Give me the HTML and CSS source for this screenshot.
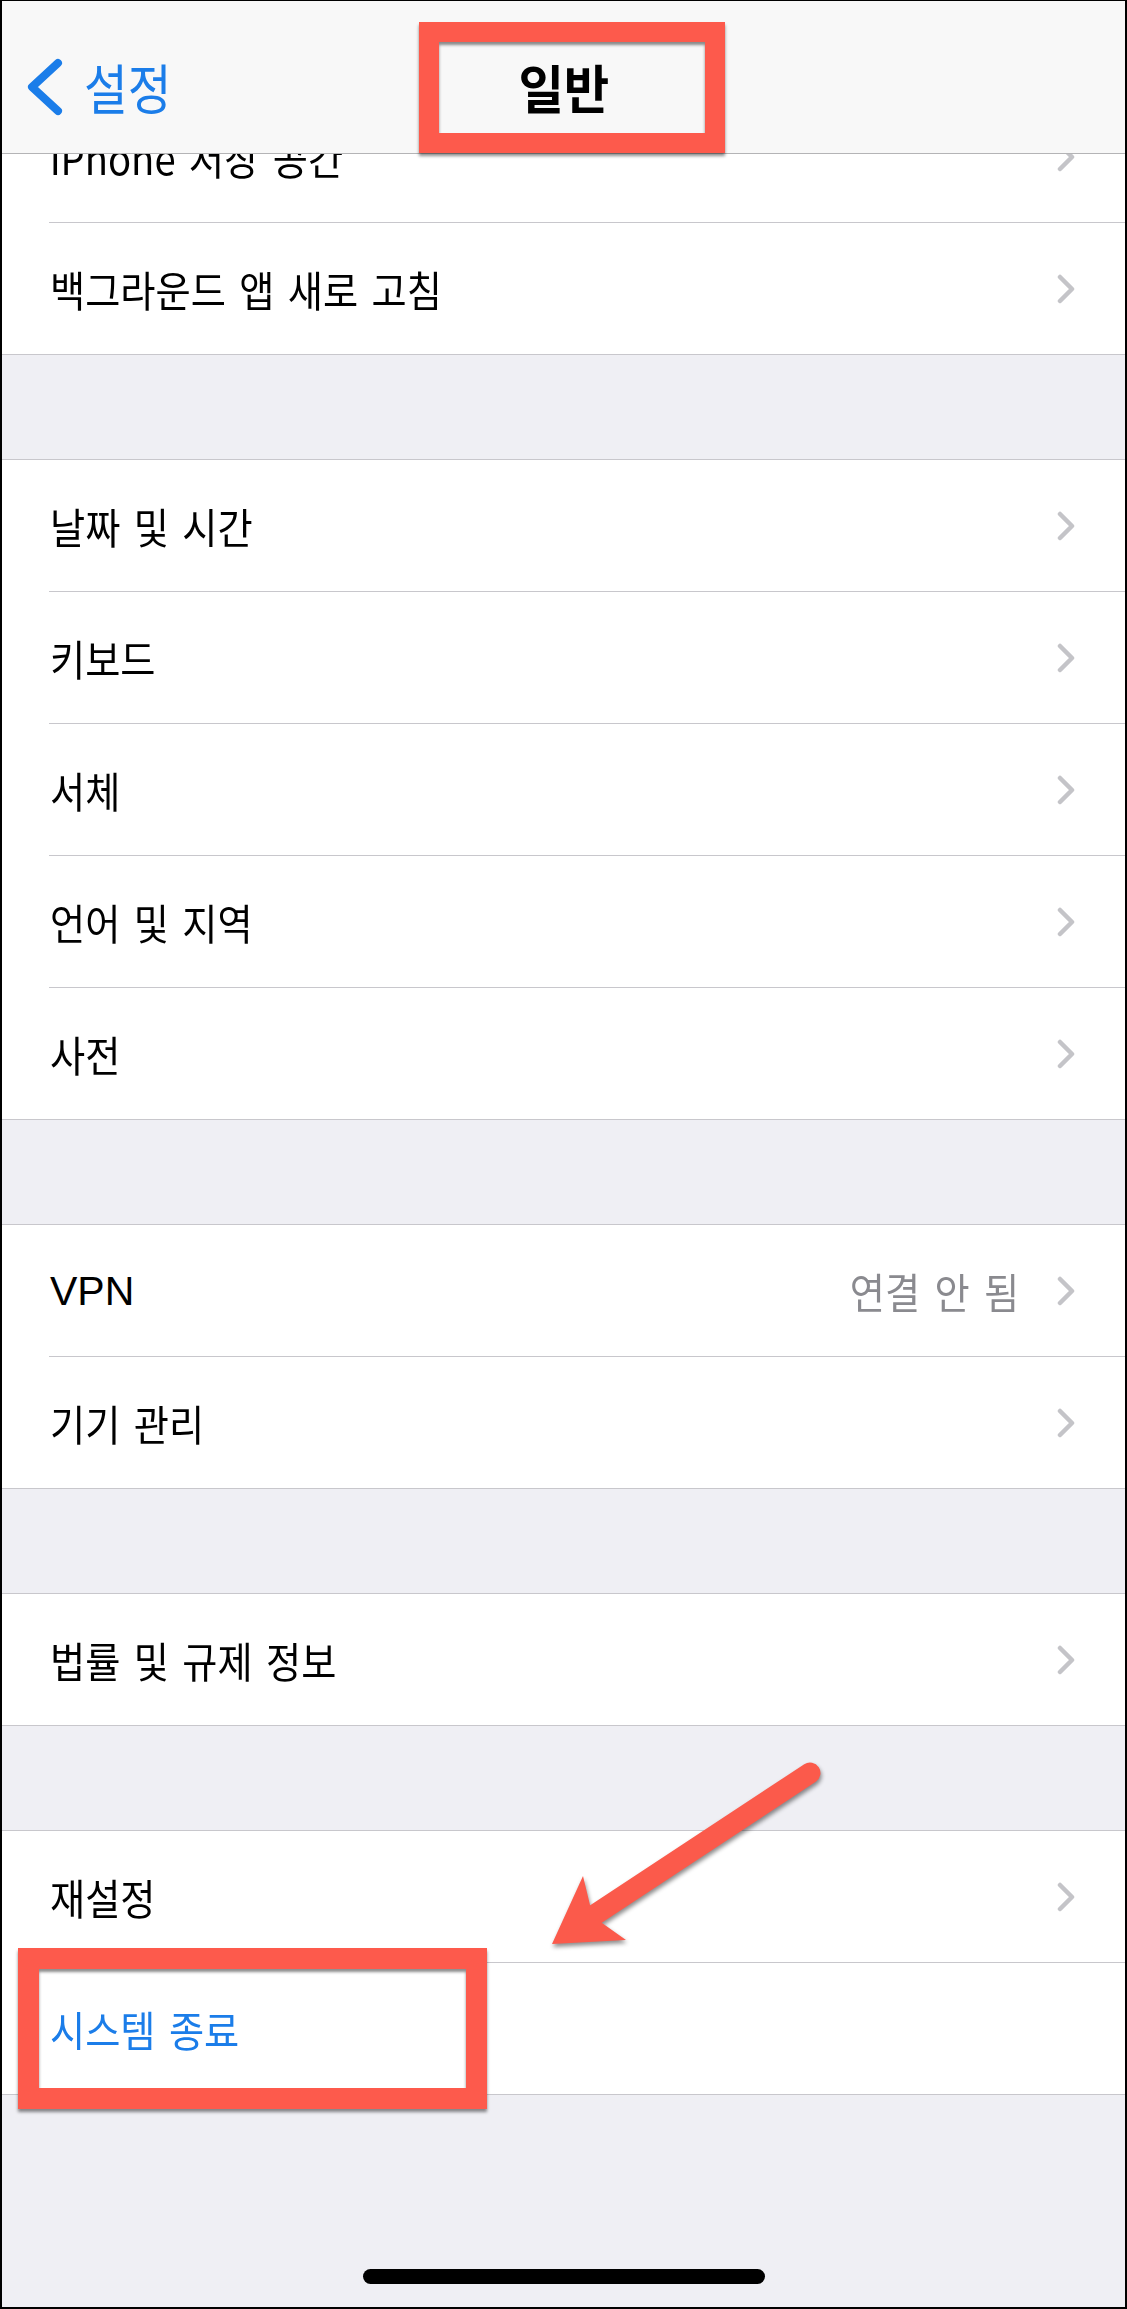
FILE: index.html
```html
<!DOCTYPE html>
<html lang="ko">
<head>
<meta charset="utf-8">
<title>일반</title>
<link rel="stylesheet" href="styles.css">
</head>
<body>
<div class="screen">
  <header class="nav">
    <a class="back">
      <svg class="back-icon" viewBox="0 0 40 60" width="40" height="60"><polyline points="34,6 8,30 34,54"/></svg>
      <span class="back-label">설정</span>
    </a>
    <h1 class="title">일반</h1>
    <span class="nav-spacer"></span>
  </header>

  <main class="list">
    <section class="group group-first">
      <div class="row"><span class="label ko">iPhone 저장 공간</span><svg class="chev" viewBox="0 0 18 30"><polyline points="3,3 15,15 3,27"/></svg></div>
      <div class="row"><span class="label ko">백그라운드 앱 새로 고침</span><svg class="chev" viewBox="0 0 18 30"><polyline points="3,3 15,15 3,27"/></svg></div>
    </section>

    <section class="group">
      <div class="row"><span class="label ko">날짜 및 시간</span><svg class="chev" viewBox="0 0 18 30"><polyline points="3,3 15,15 3,27"/></svg></div>
      <div class="row"><span class="label ko">키보드</span><svg class="chev" viewBox="0 0 18 30"><polyline points="3,3 15,15 3,27"/></svg></div>
      <div class="row"><span class="label ko">서체</span><svg class="chev" viewBox="0 0 18 30"><polyline points="3,3 15,15 3,27"/></svg></div>
      <div class="row"><span class="label ko">언어 및 지역</span><svg class="chev" viewBox="0 0 18 30"><polyline points="3,3 15,15 3,27"/></svg></div>
      <div class="row"><span class="label ko">사전</span><svg class="chev" viewBox="0 0 18 30"><polyline points="3,3 15,15 3,27"/></svg></div>
    </section>

    <section class="group">
      <div class="row"><span class="label">VPN</span><span class="value ko">연결 안 됨</span><svg class="chev" viewBox="0 0 18 30"><polyline points="3,3 15,15 3,27"/></svg></div>
      <div class="row"><span class="label ko">기기 관리</span><svg class="chev" viewBox="0 0 18 30"><polyline points="3,3 15,15 3,27"/></svg></div>
    </section>

    <section class="group">
      <div class="row"><span class="label ko">법률 및 규제 정보</span><svg class="chev" viewBox="0 0 18 30"><polyline points="3,3 15,15 3,27"/></svg></div>
    </section>

    <section class="group">
      <div class="row"><span class="label ko">재설정</span><svg class="chev" viewBox="0 0 18 30"><polyline points="3,3 15,15 3,27"/></svg></div>
      <div class="row"><span class="label ko action">시스템 종료</span></div>
    </section>
  </main>

  <div class="home-indicator"></div>

  <div class="frame frame-title"></div>
  <div class="frame frame-shutdown"></div>
  <svg class="arrow" viewBox="530 1750 310 220" width="310" height="220">
    <line x1="810" y1="1773" x2="596" y2="1914"/>
    <polygon points="552,1944 583,1876 590,1905 602,1923 626,1940"/>
  </svg>
</div>
</body>
</html>
```

FILE: styles.css
```css
html, body {
  margin: 0;
  padding: 0;
  background: #ffffff;
}

.screen {
  position: relative;
  width: 1127px;
  height: 2309px;
  box-sizing: border-box;
  border-style: solid;
  border-color: #000;
  border-width: 1px 2px 2px 2px;
  background: #efeff4;
  overflow: hidden;
  font-family: "Liberation Sans", "Noto Sans CJK KR", sans-serif;
  color: #000;
}

/* navigation bar */
.nav {
  position: absolute;
  top: 0;
  left: 0;
  right: 0;
  height: 153px;
  box-sizing: border-box;
  padding: 20px 22px 0 22px;
  background: #f8f8f8;
  border-bottom: 1px solid #b4b4b6;
  display: grid;
  grid-template-columns: 1fr auto 1fr;
  align-items: center;
  z-index: 2;
}

.back {
  display: flex;
  align-items: center;
  gap: 20px;
  color: #1b7de9;
}

.back-icon {
  display: block;
  width: 40px;
  height: 60px;
}

.back-icon polyline {
  fill: none;
  stroke: #1b7de9;
  stroke-width: 8;
  stroke-linecap: round;
  stroke-linejoin: round;
}

.back-label {
  display: inline-block;
  font-family: "Noto Sans CJK KR", sans-serif;
  font-size: 54px;
  line-height: 1;
  transform: scaleX(0.88);
  transform-origin: left center;
}

.title {
  margin: 0;
  font-family: "Noto Sans CJK KR", sans-serif;
  font-weight: 700;
  font-size: 52px;
  line-height: 1;
  transform: scaleX(0.95);
}

/* list */
.list {
  display: block;
}

.group {
  margin-top: 104px;
  background: #fff;
  border-top: 1px solid #c8c7cc;
  border-bottom: 1px solid #c8c7cc;
}

.group-first {
  margin-top: 89px;
}

.row {
  position: relative;
  display: flex;
  align-items: center;
  height: 132px;
  box-sizing: border-box;
  padding: 0 50px 0 48px;
}

.row::after {
  content: "";
  position: absolute;
  left: 47px;
  right: 0;
  bottom: 0;
  height: 1px;
  background: #c8c7cc;
}

.row:last-child {
  height: 131px;
}

.row:last-child::after {
  display: none;
}

.label {
  display: inline-block;
  font-size: 41px;
  line-height: 1;
  white-space: nowrap;
}

.ko {
  font-family: "Noto Sans CJK KR", sans-serif;
  font-size: 42px;
  word-spacing: 3px;
  transform: scaleX(0.91);
  transform-origin: left center;
}

.action {
  color: #1b7de9;
}

.value {
  display: inline-block;
  margin-left: auto;
  margin-right: 38px;
  line-height: 1;
  color: #8a8a8f;
  white-space: nowrap;
  transform-origin: right center;
  word-spacing: 4px;
}

.chev {
  display: block;
  width: 18px;
  height: 30px;
  margin-left: auto;
  flex: none;
}

.value + .chev {
  margin-left: 0;
}

.chev polyline {
  fill: none;
  stroke: #c4c4c8;
  stroke-width: 4.5;
  stroke-linecap: round;
  stroke-linejoin: round;
}

.home-indicator {
  width: 402px;
  height: 15px;
  margin: 174px auto 0;
  border-radius: 8px;
  background: #000;
}

/* annotations */
.frame {
  position: absolute;
  box-sizing: border-box;
  border: 20px solid #fd5a4c;
  box-shadow: 0 3px 3px rgba(0, 0, 0, 0.45), inset 0 3px 3px rgba(0, 0, 0, 0.45);
  z-index: 3;
}

.frame-title {
  left: 417px;
  top: 21px;
  width: 306px;
  height: 131px;
}

.frame-shutdown {
  left: 16px;
  top: 1947px;
  width: 469px;
  height: 161px;
  border-width: 21px;
}

.arrow {
  position: absolute;
  left: 528px;
  top: 1749px;
  z-index: 3;
  overflow: visible;
  filter: drop-shadow(1px 3px 2px rgba(0, 0, 0, 0.45));
}

.arrow line {
  stroke: #fb5a4b;
  stroke-width: 21;
  stroke-linecap: round;
}

.arrow polygon {
  fill: #fb5a4b;
}
```
